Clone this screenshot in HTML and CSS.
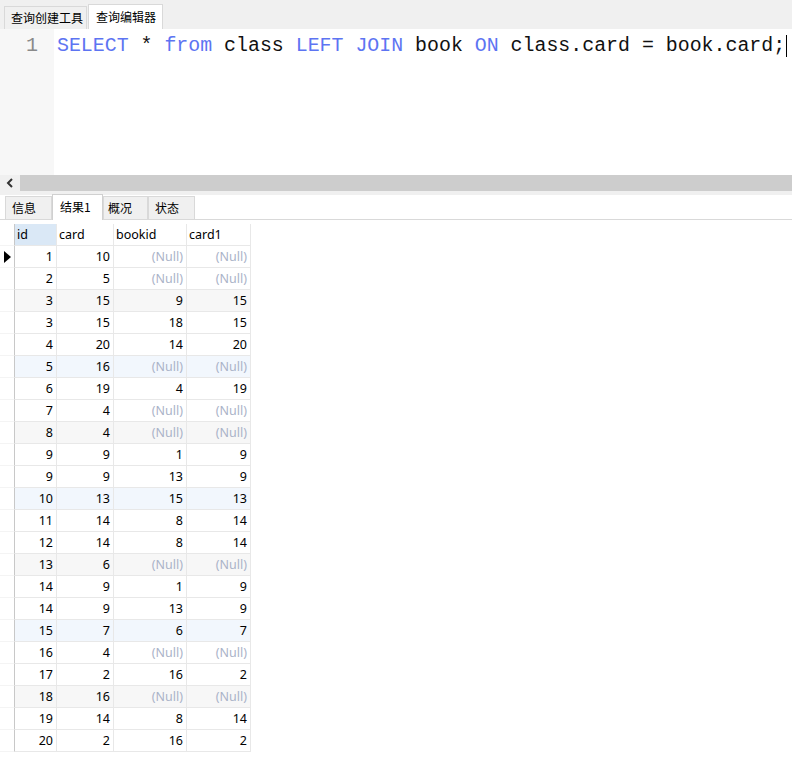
FILE: index.html
```html
<!DOCTYPE html>
<html>
<head>
<meta charset="utf-8">
<link rel="stylesheet" href="styles.css">
</head>
<body>
<div class="tabbar">
  <div class="tab">查询创建工具</div>
  <div class="tab active">查询编辑器</div>
</div>
<div class="editor">
  <div class="gutter"><span class="ln">1</span></div>
  <div class="code"><span class="kw">SELECT</span> * <span class="kw">from</span> class <span class="kw">LEFT JOIN</span> book <span class="kw">ON</span> class.card = book.card;<span class="caret"></span></div>
</div>
<div class="hscroll">
  <div class="arrow"><svg width="8" height="10" viewBox="0 0 8 10"><path d="M6 1 L2 5 L6 9" fill="none" stroke="#333" stroke-width="2"/></svg></div>
  <div class="track"></div>
</div>
<div class="strip"></div>
<div class="restabs">
  <div class="rtab">信息</div>
  <div class="rtab active">结果1</div>
  <div class="rtab narrow">概况</div>
  <div class="rtab">状态</div>
</div>
<div class="grid">
  <div class="c sel h"></div><div class="c h hid">id</div><div class="c h">card</div><div class="c h">bookid</div><div class="c h">card1</div>
  <div class="c sel"><svg width="7" height="12" viewBox="0 0 7 12"><path d="M0 0 L7 6 L0 12 Z" fill="#000"/></svg></div><div class="c">1</div><div class="c">10</div><div class="c n">(Null)</div><div class="c n">(Null)</div>
  <div class="c sel"></div><div class="c">2</div><div class="c">5</div><div class="c n">(Null)</div><div class="c n">(Null)</div>
  <div class="c sel"></div><div class="c g">3</div><div class="c g">15</div><div class="c g">9</div><div class="c g">15</div>
  <div class="c sel"></div><div class="c">3</div><div class="c">15</div><div class="c">18</div><div class="c">15</div>
  <div class="c sel"></div><div class="c">4</div><div class="c">20</div><div class="c">14</div><div class="c">20</div>
  <div class="c sel"></div><div class="c b">5</div><div class="c b">16</div><div class="c b n">(Null)</div><div class="c b n">(Null)</div>
  <div class="c sel"></div><div class="c">6</div><div class="c">19</div><div class="c">4</div><div class="c">19</div>
  <div class="c sel"></div><div class="c">7</div><div class="c">4</div><div class="c n">(Null)</div><div class="c n">(Null)</div>
  <div class="c sel"></div><div class="c g">8</div><div class="c g">4</div><div class="c g n">(Null)</div><div class="c g n">(Null)</div>
  <div class="c sel"></div><div class="c">9</div><div class="c">9</div><div class="c">1</div><div class="c">9</div>
  <div class="c sel"></div><div class="c">9</div><div class="c">9</div><div class="c">13</div><div class="c">9</div>
  <div class="c sel"></div><div class="c b">10</div><div class="c b">13</div><div class="c b">15</div><div class="c b">13</div>
  <div class="c sel"></div><div class="c">11</div><div class="c">14</div><div class="c">8</div><div class="c">14</div>
  <div class="c sel"></div><div class="c">12</div><div class="c">14</div><div class="c">8</div><div class="c">14</div>
  <div class="c sel"></div><div class="c g">13</div><div class="c g">6</div><div class="c g n">(Null)</div><div class="c g n">(Null)</div>
  <div class="c sel"></div><div class="c">14</div><div class="c">9</div><div class="c">1</div><div class="c">9</div>
  <div class="c sel"></div><div class="c">14</div><div class="c">9</div><div class="c">13</div><div class="c">9</div>
  <div class="c sel"></div><div class="c b">15</div><div class="c b">7</div><div class="c b">6</div><div class="c b">7</div>
  <div class="c sel"></div><div class="c">16</div><div class="c">4</div><div class="c n">(Null)</div><div class="c n">(Null)</div>
  <div class="c sel"></div><div class="c">17</div><div class="c">2</div><div class="c">16</div><div class="c">2</div>
  <div class="c sel"></div><div class="c g">18</div><div class="c g">16</div><div class="c g n">(Null)</div><div class="c g n">(Null)</div>
  <div class="c sel"></div><div class="c">19</div><div class="c">14</div><div class="c">8</div><div class="c">14</div>
  <div class="c sel"></div><div class="c">20</div><div class="c">2</div><div class="c">16</div><div class="c">2</div>
</div>
</body>
</html>
```

FILE: styles.css
```css
* { box-sizing: border-box; }
html, body { margin: 0; padding: 0; background: #fff; }
body {
  width: 792px;
  height: 758px;
  overflow: hidden;
  font-family: "Noto Sans", "Noto Sans CJK SC", sans-serif;
  font-size: 12.5px;
  color: #000;
}
.tabbar {
  height: 29px;
  background: #f0f0f0;
  display: flex;
  align-items: flex-end;
  padding-left: 4px;
  gap: 1px;
}
.tab {
  width: 83px;
  height: 23px;
  padding: 0 0 0 6px;
  border: 1px solid #d9d9d9;
  border-bottom: none;
  background: #f0f0f0;
  font-family: "Noto Sans CJK SC", sans-serif;
  font-size: 12px;
  line-height: 21px;
}
.tab.active {
  width: 75px;
  height: 25px;
  background: #fff;
  line-height: 23px;
  padding: 0 0 0 7px;
}
.editor {
  height: 146px;
  display: flex;
  background: #fff;
}
.gutter {
  width: 54px;
  background: #f7f7f7;
  text-align: right;
  padding: 6px 16px 0 0;
}
.ln {
  font-family: "Liberation Mono", monospace;
  font-size: 20px;
  line-height: 22px;
  color: #8a8a8a;
}
.code {
  padding: 6px 0 0 3px;
  font-family: "Liberation Mono", monospace;
  font-size: 19.9px;
  line-height: 22px;
  color: #111;
  white-space: pre;
}
.kw { color: #5d74f2; }
.caret {
  display: inline-block;
  width: 1px;
  height: 22px;
  background: #000;
  vertical-align: top;
  margin-left: 1px;
}
.hscroll {
  height: 16px;
  display: flex;
  background: #f0f0f0;
}
.arrow {
  width: 20px;
  display: flex;
  align-items: center;
  justify-content: center;
}
.track {
  flex: 1;
  background: #cdcdcd;
}
.strip {
  height: 4px;
  background: #f0f0f0;
}
.restabs {
  height: 25px;
  display: flex;
  align-items: flex-end;
  padding-left: 5px;
  border-bottom: 1px solid #d9d9d9;
}
.rtab {
  width: 47px;
  height: 23px;
  padding: 0 0 0 6px;
  background: #f0f0f0;
  border: 1px solid #d9d9d9;
  border-bottom: none;
  font-family: "Noto Sans CJK SC", sans-serif;
  font-size: 12px;
  line-height: 21px;
}
.rtab.narrow {
  width: 45px;
  padding-left: 4px;
}
.rtab.active {
  width: 51px;
  height: 26px;
  background: #fff;
  padding: 0 0 0 7px;
  line-height: 23px;
  margin-bottom: -1px;
  border-color: #d0d0d0;
}
.grid {
  margin-top: 4px;
  display: grid;
  grid-template-columns: 15px 42px 57px 73px 64px;
  grid-auto-rows: 22px;
  width: 251px;
}
.c {
  border-right: 1px solid #e8e8e8;
  border-bottom: 1px solid #e8e8e8;
  text-align: right;
  padding: 0 3px 0 2px;
  line-height: 21px;
  white-space: nowrap;
  overflow: hidden;
}
.c.h {
  text-align: left;
  padding-left: 2px;
}
.c.hid { background: #dae8f6; }
.c.sel {
  border-right: 1px solid #c8c8c8;
  border-bottom: 1px solid #f4f4f4;
  padding: 0;
  display: flex;
  align-items: center;
  justify-content: center;
}
.c.g { background: #f7f7f7; }
.c.b { background: #f2f7fd; }
.c.n { color: #aab3c8; }
```
